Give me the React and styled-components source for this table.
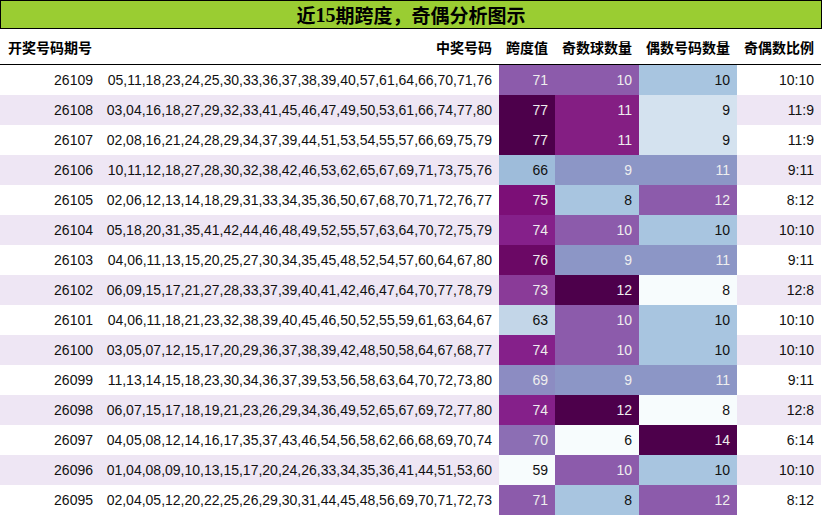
import styled, { createGlobalStyle } from "styled-components";

const GlobalStyle = createGlobalStyle`
  body {
    margin: 0;
    background: #fff;
    font-family: "Liberation Sans", "Noto Sans CJK SC", sans-serif;
  }
`;

const rows = [
  ["26109", "05,11,18,23,24,25,30,33,36,37,38,39,40,57,61,64,66,70,71,76", 71, 10, 10, "10:10"],
  ["26108", "03,04,16,18,27,29,32,33,41,45,46,47,49,50,53,61,66,74,77,80", 77, 11, 9, "11:9"],
  ["26107", "02,08,16,21,24,28,29,34,37,39,44,51,53,54,55,57,66,69,75,79", 77, 11, 9, "11:9"],
  ["26106", "10,11,12,18,27,28,30,32,38,42,46,53,62,65,67,69,71,73,75,76", 66, 9, 11, "9:11"],
  ["26105", "02,06,12,13,14,18,29,31,33,34,35,36,50,67,68,70,71,72,76,77", 75, 8, 12, "8:12"],
  ["26104", "05,18,20,31,35,41,42,44,46,48,49,52,55,57,63,64,70,72,75,79", 74, 10, 10, "10:10"],
  ["26103", "04,06,11,13,15,20,25,27,30,34,35,45,48,52,54,57,60,64,67,80", 76, 9, 11, "9:11"],
  ["26102", "06,09,15,17,21,27,28,33,37,39,40,41,42,46,47,64,70,77,78,79", 73, 12, 8, "12:8"],
  ["26101", "04,06,11,18,21,23,32,38,39,40,45,46,50,52,55,59,61,63,64,67", 63, 10, 10, "10:10"],
  ["26100", "03,05,07,12,15,17,20,29,36,37,38,39,42,48,50,58,64,67,68,77", 74, 10, 10, "10:10"],
  ["26099", "11,13,14,15,18,23,30,34,36,37,39,53,56,58,63,64,70,72,73,80", 69, 9, 11, "9:11"],
  ["26098", "06,07,15,17,18,19,21,23,26,29,34,36,49,52,65,67,69,72,77,80", 74, 12, 8, "12:8"],
  ["26097", "04,05,08,12,14,16,17,35,37,43,46,54,56,58,62,66,68,69,70,74", 70, 6, 14, "6:14"],
  ["26096", "01,04,08,09,10,13,15,17,20,24,26,33,34,35,36,41,44,51,53,60", 59, 10, 10, "10:10"],
  ["26095", "02,04,05,12,20,22,25,26,29,30,31,44,45,48,56,69,70,71,72,73", 71, 8, 12, "8:12"],
];

// heat colours (BuPu) per column, [background, dark text?]
const spanColors = {
  59: ["#f7fcfd", true],
  63: ["#c3d6e8", true],
  66: ["#9ebcda", true],
  69: ["#8c8cc2", false],
  70: ["#8c6eb4", false],
  71: ["#8c5bab", false],
  73: ["#8a3b98", false],
  74: ["#85208a", false],
  75: ["#7c0f77", false],
  76: ["#6b0865", false],
  77: ["#4d004b", false],
};

const oddColors = {
  6: ["#f7fcfd", true],
  8: ["#a8c5e0", true],
  9: ["#8c96c6", false],
  10: ["#8c5bab", false],
  11: ["#841e83", false],
  12: ["#4d004b", false],
};

const evenColors = {
  8: ["#f7fcfd", true],
  9: ["#d4e2ef", true],
  10: ["#a8c5e0", true],
  11: ["#8c96c6", false],
  12: ["#8c5bab", false],
  14: ["#4d004b", false],
};

export default function App() {
  return (
    <>
      <GlobalStyle />
      <Page>
        <Title>
          近<Digits>15</Digits>期跨度，奇偶分析图示
        </Title>
        <Table>
          <HeadCell>开奖号码期号</HeadCell>
          <HeadCell $align="right">中奖号码</HeadCell>
          <HeadCell>跨度值</HeadCell>
          <HeadCell>奇数球数量</HeadCell>
          <HeadCell>偶数号码数量</HeadCell>
          <HeadCell>奇偶数比例</HeadCell>
          <HeadRule />
          {rows.map(([issue, nums, span, odd, even, ratio], i) => {
            const striped = i % 2 === 1;
            const [sBg, sDark] = spanColors[span];
            const [oBg, oDark] = oddColors[odd];
            const [eBg, eDark] = evenColors[even];
            return [
              <Cell key={issue + "a"} $striped={striped}>{issue}</Cell>,
              <Cell key={issue + "b"} $striped={striped}>{nums}</Cell>,
              <HeatCell key={issue + "c"} $bg={sBg} $dark={sDark}>{span}</HeatCell>,
              <HeatCell key={issue + "d"} $bg={oBg} $dark={oDark}>{odd}</HeatCell>,
              <HeatCell key={issue + "e"} $bg={eBg} $dark={eDark}>{even}</HeatCell>,
              <Cell key={issue + "f"} $striped={striped}>{ratio}</Cell>,
            ];
          })}
        </Table>
      </Page>
    </>
  );
}

const Page = styled.div`
  width: 822px;
  height: 516px;
  overflow: hidden;
`;

const Title = styled.div`
  height: 27px;

  background: #9acd32;
  border: 1px solid #000;

  display: flex;
  align-items: center;
  justify-content: center;

  font-family: "Noto Sans CJK SC", sans-serif;
  font-size: 19px;
  font-weight: 700;
  color: #000;
  line-height: 1;
`;

const Digits = styled.span`
  font-family: "Liberation Serif", serif;
  font-size: 20px;
  font-weight: 700;
`;

const Table = styled.div`
  width: 821px;

  display: grid;
  grid-template-columns: 100px 399px 56px 84px 98px 84px;
  grid-template-rows: 35px 1px;
  grid-auto-rows: 30px;
`;

const HeadCell = styled.div`
  display: flex;
  align-items: center;
  justify-content: ${(p) => (p.$align === "right" ? "flex-end" : "center")};

  padding: 0 7px;

  font-family: "Noto Sans CJK SC", sans-serif;
  font-size: 14px;
  font-weight: 700;
  color: #000;
  white-space: nowrap;
`;

const HeadRule = styled.div`
  grid-column: 1 / -1;
  background: #000;
`;

const Cell = styled.div`
  display: flex;
  align-items: center;
  justify-content: flex-end;

  padding: 0 7px;

  background: ${(p) => (p.$striped ? "#eee6f4" : "#fff")};

  font-size: 14px;
  color: #111;
  white-space: nowrap;
`;

const HeatCell = styled(Cell)`
  background: ${(p) => p.$bg};
  color: ${(p) => (p.$dark ? "#111" : "#eeeeee")};
`;
